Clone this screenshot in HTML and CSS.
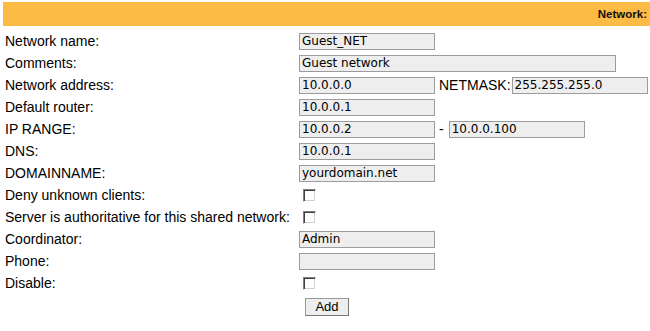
FILE: index.html
```html
<!DOCTYPE html>
<html>
<head>
<meta charset="utf-8">
<link rel="stylesheet" href="styles.css">
</head>
<body>
<div class="header">Network:</div>
<div class="form">
  <div class="row"><div class="label">Network name:</div><div class="field"><input class="text" type="text" value="Guest_NET"></div></div>
  <div class="row"><div class="label">Comments:</div><div class="field"><input class="text wide" type="text" value="Guest network"></div></div>
  <div class="row"><div class="label">Network address:</div><div class="field"><input class="text" type="text" value="10.0.0.0"><span class="mid mask">NETMASK:</span><input class="text" type="text" value="255.255.255.0"></div></div>
  <div class="row"><div class="label">Default router:</div><div class="field"><input class="text" type="text" value="10.0.0.1"></div></div>
  <div class="row"><div class="label">IP RANGE:</div><div class="field"><input class="text" type="text" value="10.0.0.2"><span class="mid dash">-</span><input class="text" type="text" value="10.0.0.100"></div></div>
  <div class="row"><div class="label">DNS:</div><div class="field"><input class="text" type="text" value="10.0.0.1"></div></div>
  <div class="row"><div class="label">DOMAINNAME:</div><div class="field"><input class="text" type="text" value="yourdomain.net"></div></div>
  <div class="row"><div class="label">Deny unknown clients:</div><div class="field"><input class="check" type="checkbox"></div></div>
  <div class="row"><div class="label">Server is authoritative for this shared network:</div><div class="field"><input class="check" type="checkbox"></div></div>
  <div class="row"><div class="label">Coordinator:</div><div class="field"><input class="text" type="text" value="Admin"></div></div>
  <div class="row"><div class="label">Phone:</div><div class="field"><input class="text" type="text" value=""></div></div>
  <div class="row"><div class="label">Disable:</div><div class="field"><input class="check" type="checkbox"></div></div>
  <div class="row btnrow"><div class="label"></div><div class="field"><button class="btn" type="button">Add</button></div></div>
</div>
</body>
</html>
```

FILE: styles.css
```css
html, body {
  margin: 0;
  padding: 0;
  background: #ffffff;
}
body {
  font-family: "Liberation Sans", Arial, sans-serif;
  font-size: 14px;
  color: #000000;
}
.header {
  margin: 2px 0 0 3px;
  padding: 5px 3px 5px 5px;
  background: #fcbb45;
  text-align: right;
  font-family: "Liberation Sans", Arial, sans-serif;
  font-weight: bold;
  font-size: 11.5px;
  line-height: 14px;
  color: #111111;
}
.form {
  padding: 4px 0 0 5px;
}
.row {
  display: flex;
  align-items: center;
  height: 22px;
}
.label {
  flex: none;
  width: 294px;
  white-space: nowrap;
  line-height: 16px;
}
.field {
  display: flex;
  align-items: center;
}
.text {
  box-sizing: border-box;
  width: 136px;
  height: 17px;
  margin: 0;
  padding: 0 2px;
  border: 1px solid #9c9c9c;
  background: #eeeeee;
  font-family: "DejaVu Sans", Verdana, sans-serif;
  font-size: 12px;
  color: #000000;
  outline: none;
}
.wide {
  width: 317px;
}
.mid {
  line-height: 16px;
}
.mask {
  margin: 0 1px 0 4px;
}
.dash {
  margin: 0 5px 0 4px;
}
.check {
  appearance: none;
  -webkit-appearance: none;
  box-sizing: border-box;
  width: 13px;
  height: 13px;
  margin: 0 0 0 4px;
  border: 1px solid;
  border-color: #808080 #ffffff #ffffff #808080;
  box-shadow: inset 1px 1px 0 #404040, inset -1px -1px 0 #d4d0c8;
  background: #ffffff;
}
.btnrow {
  height: 24px;
}
.btn {
  box-sizing: border-box;
  width: 44px;
  height: 18px;
  margin: 2px 0 0 6px;
  padding: 0;
  border: 1px solid #999999;
  border-right-color: #777777;
  border-bottom-color: #777777;
  background: #eeeeee;
  font-family: "Liberation Sans", Arial, sans-serif;
  font-size: 13px;
  line-height: 16px;
  color: #000000;
}
```
